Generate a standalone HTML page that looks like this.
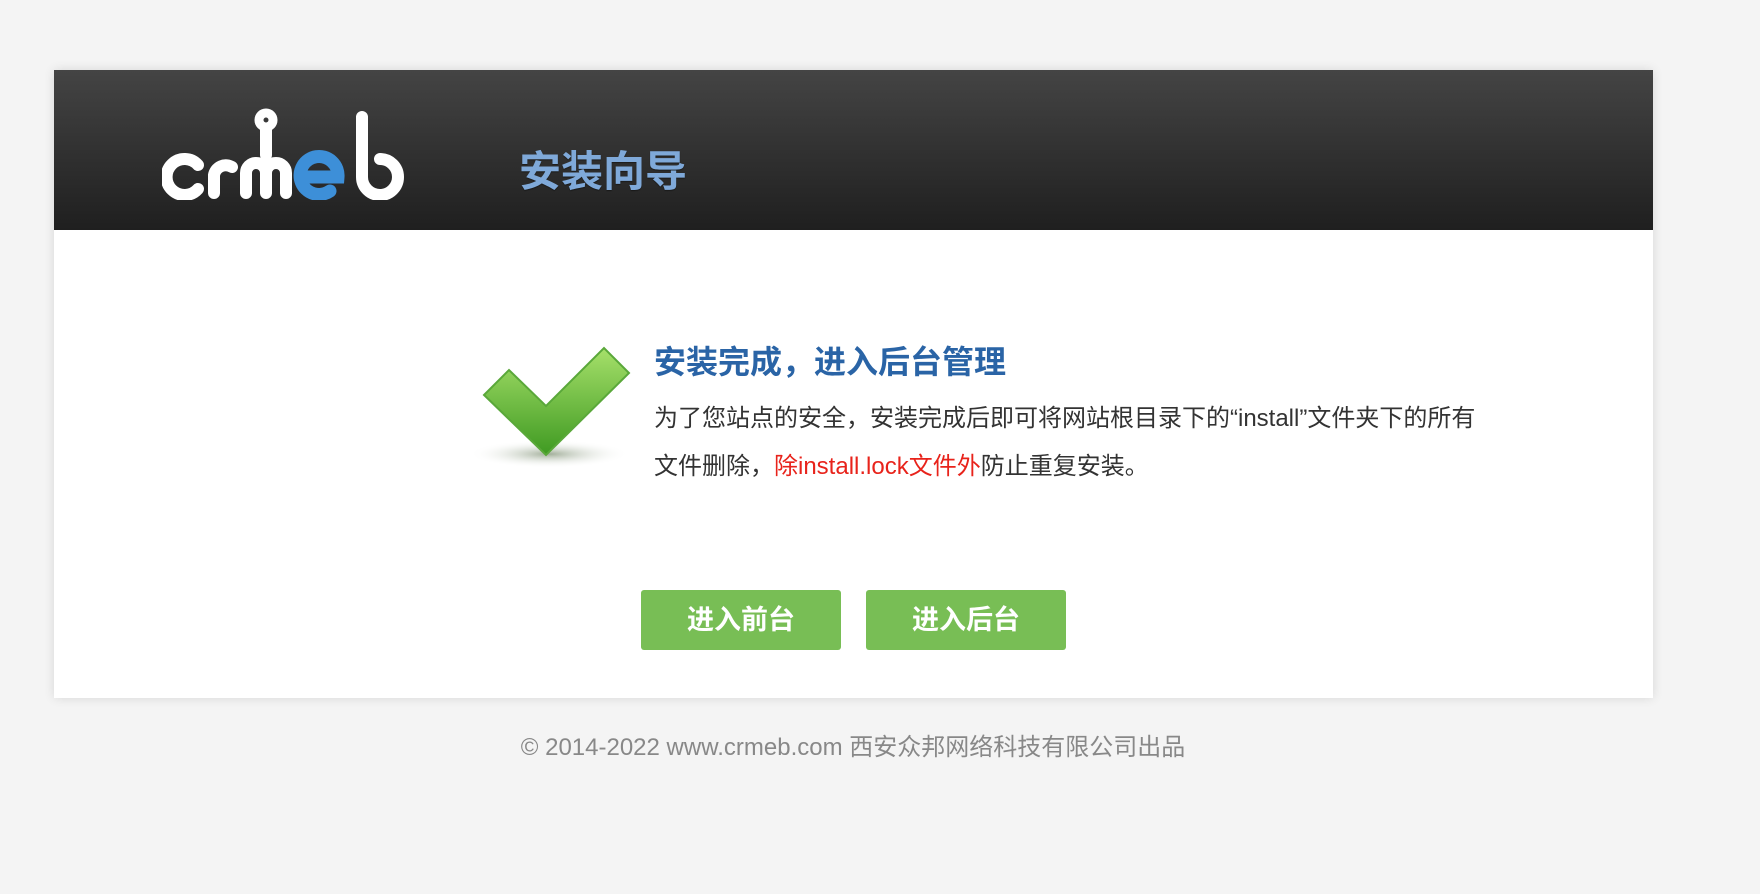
<!DOCTYPE html>
<html><head><meta charset="utf-8"><style>
html,body{margin:0;padding:0}
body{width:1760px;height:894px;background:#f4f4f4;position:relative;overflow:hidden;font-family:"Liberation Sans","Noto Sans CJK SC",sans-serif}
.card{position:absolute;left:54px;top:70px;width:1599px;height:628px;background:#fff;box-shadow:0 0 10px rgba(0,0,0,.12)}
.hd{position:absolute;left:0;top:0;width:100%;height:160px;background:linear-gradient(#444,#1f1f1f)}
.guide{position:absolute;left:465px;top:68px;font-size:42px;color:#7fa9d9;font-weight:bold;text-shadow:0 1px 1px rgba(0,0,0,.4)}
.title{position:absolute;left:600px;top:267px;font-size:32px;font-weight:bold;color:#2a64a6}
.p{position:absolute;left:600px;top:325px;font-size:24px;color:#333;line-height:48px;width:900px}
.red{color:#e8231b}
.btn{position:absolute;top:520px;width:200px;height:60px;background:#78be55;border-radius:3px;color:#fff;font-size:27px;font-weight:bold;text-align:center;line-height:60px}
.ft{position:absolute;left:0;width:1706px;text-align:center;top:727px;font-size:24px;color:#888}
</style></head><body>
<div class="card">
 <div class="hd">
  <svg style="position:absolute;left:108px;top:35px" width="260" height="95" viewBox="0 0 260 95">
   <g fill="none" stroke="#fff" stroke-width="12" stroke-linecap="round">
    <path d="M36 60 A18 18 0 1 0 36 84"/>
    <path d="M52 88 V70 A12 12 0 0 1 70 62"/>
    <path d="M84 88 V68 A10 10 0 0 1 104 68 V88 M104 68 A10 10 0 0 1 124 68 V88"/>
    <circle cx="104" cy="15" r="7" stroke-width="9"/>
    <path d="M104 24 V50"/>
    <path d="M200 12 V72 A18 18 0 1 0 218 54"/>
   </g>
   <path d="M142 72 H176 A19 19 0 1 0 168 86" fill="none" stroke="#3d8fd8" stroke-width="13" stroke-linecap="round"/>
  </svg>
  <div class="guide">安装向导</div>
 </div>
 <svg style="position:absolute;left:420px;top:268px" width="165" height="135" viewBox="0 0 165 135">
  <defs>
   <linearGradient id="g" x1="0" y1="0" x2="0" y2="1"><stop offset="0" stop-color="#a6e06a"/><stop offset="1" stop-color="#3f9a22"/></linearGradient>
   <radialGradient id="s"><stop offset="0" stop-color="#8a9a80" stop-opacity=".8"/><stop offset="1" stop-color="#fff" stop-opacity="0"/></radialGradient>
  </defs>
  <ellipse cx="75" cy="116" rx="80" ry="14" fill="url(#s)"/>
  <path d="M10 57 L35 32 L72 68 L130 10 L155 35 L72 117 Z" fill="url(#g)" stroke="#5aa83a" stroke-width="2"/>
 </svg>
 <div class="title">安装完成，进入后台管理</div>
 <div class="p">为了您站点的安全，安装完成后即可将网站根目录下的“install”文件夹下的所有<br>文件删除，<span class="red">除install.lock文件外</span>防止重复安装。</div>
 <div class="btn" style="left:587px">进入前台</div>
 <div class="btn" style="left:812px">进入后台</div>
</div>
<div class="ft">© 2014-2022 www.crmeb.com 西安众邦网络科技有限公司出品</div>
</body></html>
